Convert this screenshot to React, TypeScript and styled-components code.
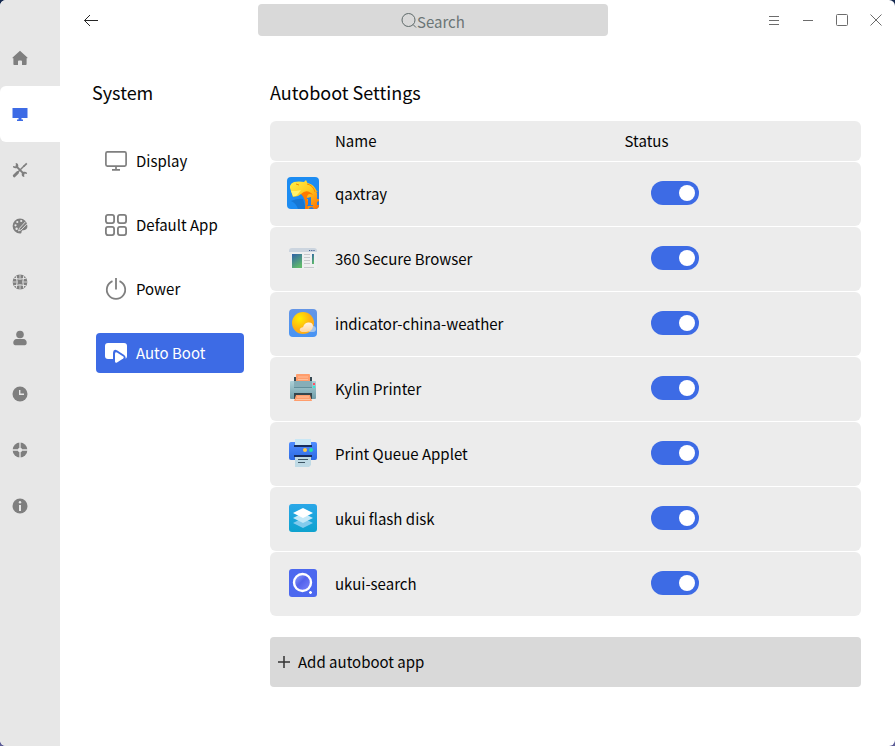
import React, { useState } from "react";
import styled, { createGlobalStyle } from "styled-components";

const GlobalStyle = createGlobalStyle`
  *, *::before, *::after { box-sizing: border-box; }
  body {
    margin: 0;
    background: linear-gradient(180deg, #14284f, #5c5c96);
    color: #050505;
    font-family: "Noto Sans CJK SC", "Noto Sans", sans-serif;
    font-size: 15px;
    line-height: 24px;
  }
  button, input { font: inherit; color: inherit; }
  svg { display: block; flex: none; }
`;

const Window = styled.div`
  display: grid;
  grid-template-columns: 60px minmax(0, 1fr);
  min-height: 100vh;
  overflow: hidden;
  border-radius: 6px;
  background: #ffffff;
`;

const Rail = styled.nav`
  display: flex;
  flex-direction: column;
  padding-top: 30px;
  background: #e7e7e7;
`;

const RailButton = styled.button<{ $active: boolean }>`
  display: flex;
  align-items: center;
  height: 56px;
  padding: 0 0 0 12px;
  border: 0;
  border-radius: 6px 0 0 6px;
  background: ${(p) => (p.$active ? "#ffffff" : "transparent")};
  color: ${(p) => (p.$active ? "#3d6be5" : "#7f7f7f")};
`;

const Main = styled.main`
  display: flex;
  flex-direction: column;
`;

const TitleBar = styled.header`
  display: flex;
  align-items: center;
  height: 40px;
  padding-right: 2px;
`;

const BackArea = styled.div`
  flex: 0 0 198px;
  padding-left: 15px;
`;

const IconButton = styled.button`
  display: flex;
  align-items: center;
  justify-content: center;
  width: 32px;
  height: 32px;
  padding: 0;
  border: 0;
  background: transparent;
  color: #262626;
`;

const SearchBox = styled.label`
  display: flex;
  flex: 0 1 350px;
  align-items: center;
  justify-content: center;
  height: 32px;
  border-radius: 4px;
  background: #d9d9d9;
  color: #5f6a6a;
`;

const SearchInput = styled.input`
  width: 48px;
  height: 28px;
  padding: 3px 0 0;
  border: 0;
  outline: 0;
  background: transparent;
  &::placeholder { color: #6b7575; opacity: 1; }
`;

const WindowControls = styled.div`
  display: flex;
  margin-left: auto;
`;

const ControlButton = styled(IconButton)`
  width: 34px;
  color: #6c6c6c;
`;

const Body = styled.div`
  display: flex;
  padding: 38px 34px 32px 32px;
`;

const SubNav = styled.nav`
  flex: 0 0 178px;
`;

const Heading = styled.h2`
  margin: 0;
  font-size: 18px;
  font-weight: 400;
  line-height: 28px;
`;

const NavList = styled.ul`
  display: flex;
  flex-direction: column;
  gap: 24px;
  margin: 0;
  padding: 35px 26px 0 4px;
  list-style: none;
`;

const NavButton = styled.button<{ $active: boolean }>`
  display: flex;
  align-items: center;
  gap: 8px;
  width: 100%;
  height: 40px;
  padding: 0 8px;
  border: 0;
  border-radius: 4px;
  background: ${(p) => (p.$active ? "#3d6be5" : "transparent")};
  color: ${(p) => (p.$active ? "#ffffff" : "#050505")};
  text-align: left;
  svg { color: ${(p) => (p.$active ? "#ffffff" : "#7f7f7f")}; }
`;

const Content = styled.section`
  flex: 1;
  min-width: 0;
`;

const AppTable = styled.table`
  width: 100%;
  margin: 14px 0 20px;
  border-spacing: 0 1px;
  table-layout: fixed;
`;

const Cell = styled.td`
  height: 64px;
  padding: 0;
  background: #ececec;
  &:first-child { border-radius: 6px 0 0 6px; }
  &:last-child { border-radius: 0 6px 6px 0; }
`;

const HeadCell = styled(Cell).attrs({ as: "th" })`
  height: 40px;
  font-weight: 400;
  text-align: left;
`;

const IconCol = styled.col`
  width: 65px;
`;

const NameCol = styled.col`
  width: 49%;
`;

const IconCell = styled(Cell)`
  padding: 0 0 2px 17px;
`;

const StatusCell = styled(Cell)`
  padding: 0 0 2px 26px;
`;

const Switch = styled.input`
  display: block;
  appearance: none;
  width: 48px;
  height: 24px;
  margin: 0;
  padding: 4px;
  border-radius: 12px;
  background: #bfbfbf;
  &::before {
    content: "";
    display: block;
    width: 16px;
    height: 16px;
    border-radius: 50%;
    background: #ffffff;
  }
  &:checked { background: #3d6be5; }
  &:checked::before { margin-left: auto; }
`;

const AddButton = styled.button`
  display: flex;
  align-items: center;
  gap: 7px;
  width: 100%;
  height: 50px;
  padding: 0 7px;
  border: 0;
  border-radius: 4px;
  background: #d9d9d9;
  color: #050505;
`;

const railItems = [
  {
    label: "Home",
    icon: <path fill="currentColor" d="M8 .8 15.400 7.400c.3.4 0 .8-.4.8h-.4V14c0 .6-.4 1-1 1H10v-3.600a1 1 0 0 0-1-1H7a1 1 0 0 0-1 1V15H2.400c-.6 0-1-.4-1-1V8.200H1c-.5 0-.7-.5-.4-.8Z" />,
  },
  {
    label: "System",
    icon: <path fill="currentColor" d="M.5 2h15v10h-6v1.500H11V15H5v-1.500h1.500V12h-6Z" />,
  },
  {
    label: "Devices",
    icon: (
      <>
        <path stroke="currentColor" strokeWidth="1.800" fill="none" d="M4.500 4.500 12 12" />
        <path stroke="currentColor" strokeWidth="3" strokeLinecap="round" d="M2.300 13.800 5.400 10.700" />
        <path stroke="currentColor" strokeWidth="1.500" d="m5.500 10.500 7-7" />
        <path fill="currentColor" d="m11 4 3.200-3.200 1.200 1.200L12.300 5ZM1 4l2.500.4L4 1.500 3 1c2.200-.4 3.800 1 3.200 3.800L5 6C2.600 6.700.8 6 1 4Zm14 8-2.500-.4-.5 2.900 1 .5c-2.200.4-3.800-1-3.200-3.800L11 10c2.400-.7 4.200 0 4 2Z" />
      </>
    ),
  },
  {
    label: "Personalized",
    icon: (
      <>
        <path fill="currentColor" d="M8 .6a7.400 7.400 0 1 0 0 14.800c2 0 1.200-1.700 2-3l2.800-.5c2.400-.5 2.600-2.300 2.600-3.900A7.400 7.400 0 0 0 8 .6Z" />
        <g fill="#e7e7e7">
          <circle cx="3.500" cy="7.300" r="1.100" />
          <circle cx="5.300" cy="4" r="1.100" />
          <circle cx="9.200" cy="3" r="1.100" />
          <circle cx="4.600" cy="10.800" r="1.200" />
        </g>
        <path stroke="#e7e7e7" strokeWidth=".9" fill="none" d="M7.500 10.300 13.500 3.700M9 12l6.300-6.500M7.500 10.300 6.500 13l2.500-1" />
      </>
    ),
  },
  {
    label: "Network",
    icon: (
      <>
        <circle cx="8" cy="8" r="7.400" fill="currentColor" />
        <g stroke="#e7e7e7" strokeWidth="1" fill="none">
          <path d="M.5 8H5M11 8h4.500M8 .5V5M8 11v4.500" strokeWidth=".8" />
          <path d="M2 4.200q6 2 12 0M2 11.800q6-2 12 0M4.200 2q2 6 0 12M11.800 2q-2 6 0 12" />
        </g>
      </>
    ),
  },
  {
    label: "Account",
    icon: (
      <>
        <circle cx="8" cy="4.500" r="3.800" fill="currentColor" />
        <path fill="currentColor" d="M4.500 9h7c2 0 3.200 1.800 3.200 3.800 0 1.700-.7 2.400-2 2.400H3.300c-1.300 0-2-.7-2-2.400C1.300 10.800 2.500 9 4.500 9Z" />
      </>
    ),
  },
  {
    label: "Date",
    icon: (
      <>
        <circle cx="8" cy="8" r="7.500" fill="currentColor" />
        <path d="M7.700 4v4.300H12" stroke="#e7e7e7" strokeWidth="1.400" fill="none" />
      </>
    ),
  },
  {
    label: "Update",
    icon: (
      <>
        <circle cx="8" cy="8" r="7.400" fill="currentColor" />
        <path d="M8 0v16M0 8h16" stroke="#e7e7e7" strokeWidth="1.300" />
        <circle cx="8" cy="8" r="2.200" fill="#e7e7e7" />
      </>
    ),
  },
  {
    label: "Notice",
    icon: (
      <>
        <circle cx="8" cy="8" r="7.500" fill="currentColor" />
        <circle cx="8" cy="4.200" r="1.200" fill="#e7e7e7" />
        <path d="M8 7v6" stroke="#e7e7e7" strokeWidth="2" />
      </>
    ),
  },
];

const navItems = [
  {
    label: "Display",
    icon: (
      <g fill="none" stroke="currentColor" strokeWidth="1.700">
        <rect x="1.900" y="2.900" width="20.200" height="14.200" rx="1.500" />
        <path d="M12 17v4M8 20.800h8" />
      </g>
    ),
  },
  {
    label: "Default App",
    icon: (
      <g fill="none" stroke="currentColor" strokeWidth="1.800">
        <rect x="1.900" y="1.900" width="8.200" height="8.200" rx="2" />
        <rect x="13.900" y="1.900" width="8.200" height="8.200" rx="2" />
        <rect x="1.900" y="13.900" width="8.200" height="8.200" rx="2" />
        <rect x="13.900" y="13.900" width="8.200" height="8.200" rx="2" />
      </g>
    ),
  },
  {
    label: "Power",
    icon: (
      <path fill="none" stroke="currentColor" strokeWidth="1.800" d="M12 1v11.500M8.500 4.200a9.200 9.200 0 1 0 7 0" />
    ),
  },
  {
    label: "Auto Boot",
    icon: (
      <>
        <rect x="1" y="2" width="22" height="16" rx="3" fill="currentColor" />
        <path d="M9 22V11.500q.5-4 4.300-2l6.900 4.500q1.800 1.500 1.500 4L15 22Z" fill="#3d6be5" />
        <path d="M11 12.500q.3-1.800 2-1l6.200 4q1.200 1 0 2l-6.200 4q-1.700.8-2-1Z" fill="#fff" />
      </>
    ),
  },
];

const appIcons: Record<string, React.ReactNode> = {
  qaxtray: (
    <>
      <defs>
        <linearGradient id="qaxGold" x1="0" y1="0" x2="1" y2="1">
          <stop offset="0" stopColor="#fff04a" />
          <stop offset=".5" stopColor="#ffcb1f" />
          <stop offset="1" stopColor="#ff6a00" />
        </linearGradient>
        <clipPath id="qaxClip"><rect width="32" height="32" rx="4" /></clipPath>
      </defs>
      <g clipPath="url(#qaxClip)">
        <rect width="32" height="32" fill="#1c8cf2" />
        <path d="M4 24q7-3 12-2l3 10H11Q9 26 4 24Z" fill="#1677d4" />
        <path d="M3 9q1-3 4-4 5-1 10 0l2-2 1.500 3q5 1 7.500 5 1 3 4 4v17H18q2-8-1-14l-3-1-3 2-5 1-2-6-1-3Z" fill="url(#qaxGold)" />
        <path d="M14 17q6-6 12 1-5-3-6 2 2 6 1 12h-3q2-9-4-15Z" fill="#ff7a00" />
        <path d="m4 14 5 0 5-1-3 4-2 2-3 0Z" fill="#fff36b" />
        <path d="M20 7q6 1 8 8M9 7l3 1" stroke="#f58a00" fill="none" />
        <path d="m20 21 4-1v8h2v1h-6v-1h1v-6h-1Zm9-6 3-1v8h-2v-6Zm1 10 2-1v4h-2ZM22 31l3-1 2 2h-5Z" fill="#2b80df" />
      </g>
    </>
  ),
  browser: (
    <>
      <defs>
        <linearGradient id="pageFill" x1="0" y1="0" x2=".5" y2="1">
          <stop offset="0" stopColor="#2f61a8" />
          <stop offset="1" stopColor="#5fb86c" />
        </linearGradient>
      </defs>
      <path d="M2 10h28v17H4V10Z" fill="#eeeff0" />
      <path d="M2 10V9q0-3 3-3h22q3 0 3 3v1Z" fill="#ccd5df" />
      <path d="M22 8.500h6" stroke="#3a5c94" strokeWidth="1.200" strokeDasharray="1.200 1" />
      <rect x="5" y="12" width="10" height="14" fill="url(#pageFill)" />
      <path d="M17 12.500h6M17 15.500h6M17 18.500h6M17 21.500h6M17 25.500h10" stroke="#c7c9cc" />
      <rect x="25" y="12" width="2" height="10" fill="url(#pageFill)" />
    </>
  ),
  weather: (
    <>
      <defs>
        <linearGradient id="skyFill" x1="0" y1="0" x2="0" y2="1">
          <stop offset="0" stopColor="#6596e6" /><stop offset="1" stopColor="#4693f4" />
        </linearGradient>
        <radialGradient id="sunFill" cx=".35" cy=".3">
          <stop offset="0" stopColor="#fff000" /><stop offset="1" stopColor="#ffae14" />
        </radialGradient>
        <linearGradient id="cloudFill" x1="0" y1="0" x2="0" y2="1">
          <stop offset="0" stopColor="#fff4e8" /><stop offset="1" stopColor="#ffd59c" />
        </linearGradient>
      </defs>
      <rect x="2" y="2" width="28" height="28" rx="4" fill="url(#skyFill)" />
      <circle cx="16" cy="16" r="11" fill="url(#sunFill)" />
      <path d="M22 25h4a2.500 2.500 0 0 0 0-6h-3Z" fill="#c9d9e9" opacity=".7" />
      <path d="M15 25q-3-1-2-3.300 1-1.700 3-1.500 1-4 5-4.700 5-.5 5 3.800-1 5.500-7 5.700Z" fill="url(#cloudFill)" />
    </>
  ),
  kylin: (
    <>
      <defs>
        <linearGradient id="steelFill" x1="0" y1="0" x2="0" y2="1">
          <stop offset="0" stopColor="#aed1d8" /><stop offset="1" stopColor="#6f9da8" />
        </linearGradient>
      </defs>
      <rect x="7" y="5" width="18" height="6" fill="#374952" />
      <path d="M9 3q0-1 1-1h12q1 0 1 1v7H9Z" fill="#ff9d6c" />
      <path d="M11 5h10M11 7.500h10" stroke="#ffbd98" />
      <rect x="3" y="9" width="26" height="18" rx="1" fill="url(#steelFill)" />
      <path d="M7 9h18v7H7Z" fill="#86aeb8" />
      <path d="M7 15.500h18" stroke="#628f9b" />
      <path d="M26 11h2v2h-2Z" fill="#ff4f60" />
      <path d="M26 14h2v2h-2Z" fill="#32ead6" />
      <path d="M7 21h18v6H7Z" fill="#34454d" />
      <path d="m9 23-2 6h18l-2-6Z" fill="#ff9d6c" />
      <path d="M10 25h12M9 27.500h14" stroke="#ffc19d" />
    </>
  ),
  queue: (
    <>
      <defs>
        <linearGradient id="blueFill" x1="0" y1="0" x2="0" y2="1">
          <stop offset="0" stopColor="#508cff" /><stop offset="1" stopColor="#2c6ae3" />
        </linearGradient>
      </defs>
      <rect x="2" y="5" width="28" height="18" rx="2" fill="url(#blueFill)" />
      <path d="M8 2h16v7H8Z" fill="#c9e7f5" />
      <path d="M7 8h18v2H7ZM7 18h18v2H7Z" fill="#172e60" />
      <circle cx="18" cy="13" r="2" fill="#ffca48" />
      <circle cx="24" cy="13" r="2" fill="#22dfaa" />
      <path d="M8 20h16v8l-2 2H8Z" fill="#bfdae5" />
      <path d="M11 22.500h10M11 25.500h7" stroke="#3d5564" />
    </>
  ),
  disk: (
    <>
      <defs>
        <linearGradient id="diskFill" x1="0" y1="0" x2="0" y2="1">
          <stop offset="0" stopColor="#2aa7e8" /><stop offset="1" stopColor="#0ea2ce" />
        </linearGradient>
      </defs>
      <rect x="2" y="2" width="28" height="28" rx="3" fill="url(#diskFill)" />
      <path d="m6 21 10-5 10 5-10 5Z" fill="#82cbed" />
      <path d="m6 16 10-5 10 5-10 5Z" fill="#c3e8f8" />
      <path d="m6 11 10-5 10 5-10 5Z" fill="#ffffff" />
    </>
  ),
  search: (
    <>
      <defs>
        <linearGradient id="lensFill" x1="0" y1="0" x2="1" y2="1">
          <stop offset="0" stopColor="#9db0ff" /><stop offset=".45" stopColor="#5362eb" /><stop offset="1" stopColor="#7f88ff" />
        </linearGradient>
      </defs>
      <rect x="2" y="2" width="28" height="28" rx="3" fill="#4c68ef" />
      <circle cx="15.500" cy="15.500" r="8.500" fill="url(#lensFill)" stroke="#ffffff" strokeWidth="2.400" />
      <path d="M23.500 24v3M22 25.500h3" stroke="#ffffff" strokeWidth="1.400" />
    </>
  ),
};

const initialApps = [
  { name: "qaxtray", icon: "qaxtray", on: true },
  { name: "360 Secure Browser", icon: "browser", on: true },
  { name: "indicator-china-weather", icon: "weather", on: true },
  { name: "Kylin Printer", icon: "kylin", on: true },
  { name: "Print Queue Applet", icon: "queue", on: true },
  { name: "ukui flash disk", icon: "disk", on: true },
  { name: "ukui-search", icon: "search", on: true },
];

const controls = [
  { label: "Menu", path: "M3 4.500h10M3 8.500h10M3 12.500h10" },
  { label: "Minimize", path: "M3 8.500h10" },
  { label: "Maximize", path: "M3.500 2.500h9q1 0 1 1v9q0 1-1 1h-9q-1 0-1-1v-9q0-1 1-1Z" },
  { label: "Close", path: "M2.500 2.500l11 11M13.500 2.500l-11 11" },
];

export default function App() {
  const [apps, setApps] = useState(initialApps);
  const toggle = (name: string) =>
    setApps((list) => list.map((a) => (a.name === name ? { ...a, on: !a.on } : a)));

  return (
    <>
      <GlobalStyle />
      <Window>
        <Rail aria-label="Categories">
          {railItems.map((item) => (
            <RailButton key={item.label} type="button" aria-label={item.label} $active={item.label === "System"}>
              <svg width="16" height="16" viewBox="0 0 16 16" aria-hidden="true">{item.icon}</svg>
            </RailButton>
          ))}
        </Rail>
        <Main>
          <TitleBar>
            <BackArea>
              <IconButton type="button" aria-label="Back">
                <svg width="16" height="16" viewBox="0 0 16 16" fill="none" stroke="currentColor" aria-hidden="true">
                  <path d="M1.500 8.500H15M7 3 1.500 8.500 7 14" />
                </svg>
              </IconButton>
            </BackArea>
            <SearchBox>
              <svg width="16" height="16" viewBox="0 0 16 16" fill="none" stroke="currentColor" aria-hidden="true">
                <circle cx="7.500" cy="8" r="6.500" />
                <path d="m12 12.500 3 3" />
              </svg>
              <SearchInput type="text" placeholder="Search" aria-label="Search" />
            </SearchBox>
            <WindowControls>
              {controls.map((c) => (
                <ControlButton key={c.label} type="button" aria-label={c.label}>
                  <svg width="16" height="16" viewBox="0 0 16 16" fill="none" stroke="currentColor" aria-hidden="true">
                    <path d={c.path} />
                  </svg>
                </ControlButton>
              ))}
            </WindowControls>
          </TitleBar>
          <Body>
            <SubNav aria-label="System">
              <Heading>System</Heading>
              <NavList>
                {navItems.map((item) => (
                  <li key={item.label}>
                    <NavButton type="button" $active={item.label === "Auto Boot"}>
                      <svg width="24" height="24" viewBox="0 0 24 24" aria-hidden="true">{item.icon}</svg>
                      {item.label}
                    </NavButton>
                  </li>
                ))}
              </NavList>
            </SubNav>
            <Content>
              <Heading>Autoboot Settings</Heading>
              <AppTable>
                <colgroup>
                  <IconCol />
                  <NameCol />
                  <col />
                </colgroup>
                <thead>
                  <tr>
                    <HeadCell aria-label="Icon" />
                    <HeadCell>Name</HeadCell>
                    <HeadCell>Status</HeadCell>
                  </tr>
                </thead>
                <tbody>
                  {apps.map((app) => (
                    <tr key={app.name}>
                      <IconCell>
                        <svg width="32" height="32" viewBox="0 0 32 32" aria-hidden="true">{appIcons[app.icon]}</svg>
                      </IconCell>
                      <Cell>{app.name}</Cell>
                      <StatusCell>
                        <Switch
                          type="checkbox"
                          role="switch"
                          aria-label={app.name}
                          checked={app.on}
                          onChange={() => toggle(app.name)}
                        />
                      </StatusCell>
                    </tr>
                  ))}
                </tbody>
              </AppTable>
              <AddButton type="button">
                <svg width="14" height="14" viewBox="0 0 14 14" fill="none" stroke="#333333" strokeWidth="1.500" aria-hidden="true">
                  <path d="M7 1v12M1 7h12" />
                </svg>
                Add autoboot app
              </AddButton>
            </Content>
          </Body>
        </Main>
      </Window>
    </>
  );
}
